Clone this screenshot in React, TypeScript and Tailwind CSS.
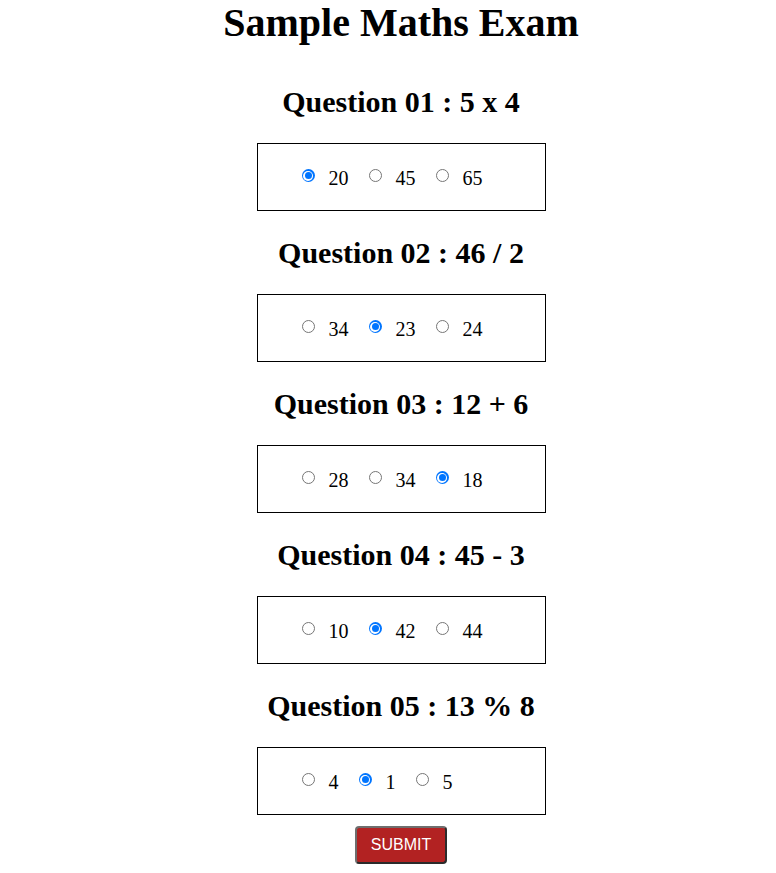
import React from "react";

const questions = [
  { title: "Question 01 : 5 x 4", options: ["20", "45", "65"], checked: 0 },
  { title: "Question 02 : 46 / 2", options: ["34", "23", "24"], checked: 1 },
  { title: "Question 03 : 12 + 6", options: ["28", "34", "18"], checked: 2 },
  { title: "Question 04 : 45 - 3", options: ["10", "42", "44"], checked: 1 },
  { title: "Question 05 : 13 % 8", options: ["4", "1", "5"], checked: 1 },
];

function Radio({ checked }: { checked: boolean }) {
  return checked ? (
    <span className="inline-block w-[13px] h-[13px] rounded-full bg-[#0075ff] p-[1.5px] ml-[5px] mr-[3px] mb-[3px] align-baseline">
      <span className="block w-[10px] h-[10px] rounded-full bg-white p-[1.5px]">
        <span className="block w-[7px] h-[7px] rounded-full bg-[#0075ff]" />
      </span>
    </span>
  ) : (
    <span className="inline-block w-[13px] h-[13px] rounded-full border border-[#767676] bg-white ml-[5px] mr-[3px] mb-[3px] align-baseline" />
  );
}

export default function App() {
  return (
    <div
      className="w-[776px] min-h-[873px] bg-white pl-[26px] flex flex-col items-center text-black"
      style={{ fontFamily: '"Liberation Serif", "Times New Roman", serif' }}
    >
      <h1 className="m-0 text-[40px] leading-[46px] font-bold">Sample Maths Exam</h1>
      <div className="h-[39px]" />
      {questions.map((q, qi) => (
        <div key={qi} className="flex flex-col items-center">
          {qi > 0 && <div className="h-[25px]" />}
          <h2 className="m-0 text-[30px] leading-[34px] font-bold">{q.title}</h2>
          <div className="h-[24px]" />
          <div className="w-[289px] h-[68px] border border-black pl-[39px] pt-[23px] text-[20px] leading-[23px]">
            {q.options.map((o, oi) => (
              <span key={oi} className="inline">
                <Radio checked={oi === q.checked} />
                <span className="ml-[11px] mr-[15px]">{o}</span>
              </span>
            ))}
          </div>
        </div>
      ))}
      <div className="h-[11px]" />
      <button
        className="h-[38px] px-[14px] bg-[#b22222] text-white text-[16px] rounded-[4px] border-2 border-t-[#6e6e6e] border-l-[#6e6e6e] border-b-[#2b2b2b] border-r-[#2b2b2b]"
        style={{ fontFamily: '"Liberation Sans", Arial, sans-serif' }}
      >
        SUBMIT
      </button>
    </div>
  );
}
